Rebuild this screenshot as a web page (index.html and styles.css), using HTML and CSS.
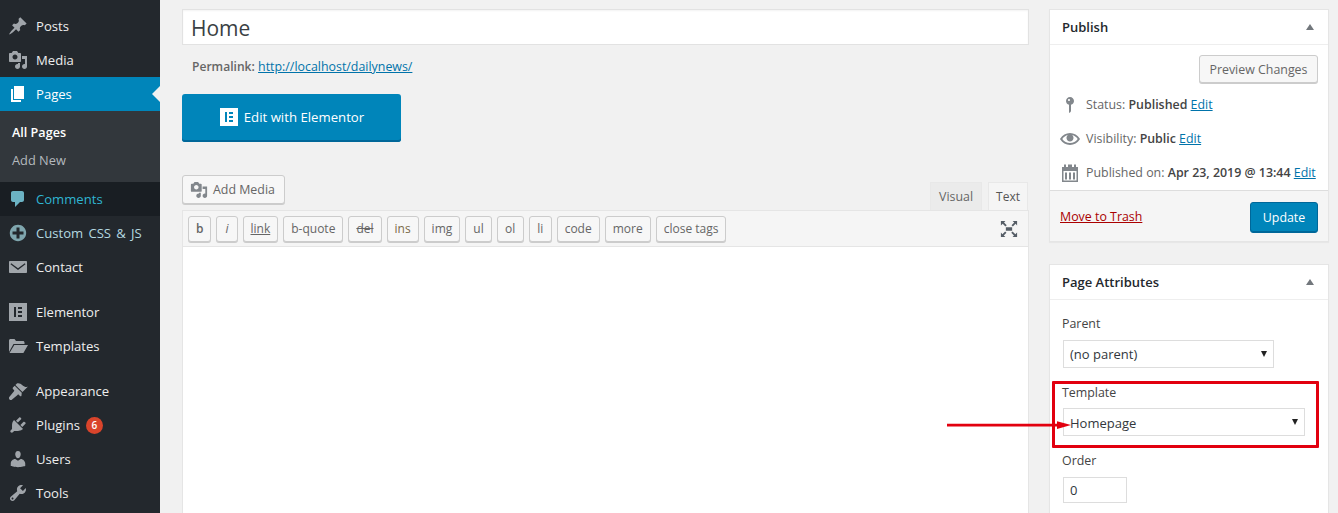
FILE: index.html
```html
<!DOCTYPE html>
<html lang="en">
<head>
<meta charset="utf-8">
<title>Edit Page</title>
<link rel="stylesheet" href="styles.css">
</head>
<body>
<svg class="sprite" aria-hidden="true">
  <symbol id="i-post" viewBox="0 0 20 20"><path d="M10.44 3.02l1.82-1.82 6.36 6.35-1.83 1.82c-1.05-.68-2.48-.57-3.41.36l-.75.75c-.92.93-1.04 2.35-.35 3.41l-1.83 1.82-2.41-2.41-2.8 2.79c-.42.42-3.38 2.71-3.8 2.29s1.86-3.39 2.28-3.81l2.79-2.79L4.1 9.36l1.83-1.82c1.05.69 2.48.57 3.4-.36l.75-.75c.93-.92 1.05-2.35.36-3.41z"/></symbol>
  <symbol id="i-media" viewBox="0 0 20 20"><path d="M13 11V4c0-.55-.45-1-1-1h-1.67L9 1H5L3.67 3H2c-.55 0-1 .45-1 1v7c0 .55.45 1 1 1h10c.55 0 1-.45 1-1zM7 4.5c1.38 0 2.5 1.12 2.5 2.5S8.38 9.5 7 9.5 4.5 8.38 4.5 7 5.62 4.5 7 4.5zM14 6h5v10.5c0 1.38-1.12 2.5-2.5 2.5S14 17.88 14 16.5s1.12-2.5 2.5-2.5c.17 0 .34.02.5.05V9h-3V6zm-4 8.05V13h2v3.5c0 1.38-1.12 2.5-2.5 2.5S7 17.88 7 16.5 8.12 14 9.5 14c.17 0 .34.02.5.05z"/></symbol>
  <symbol id="i-page" viewBox="0 0 20 20"><path d="M6 15V2h10v13H6zm-1 1h8v2H3V5h2v11z"/></symbol>
  <symbol id="i-comment" viewBox="0 0 20 20"><path d="M5 2h9c1.1 0 2 .9 2 2v7c0 1.1-.9 2-2 2h-2l-5 5v-5H5c-1.1 0-2-.9-2-2V4c0-1.1.9-2 2-2z"/></symbol>
  <symbol id="i-plus" viewBox="0 0 20 20"><path d="M15.8 4.2c3.2 3.21 3.2 8.39 0 11.6-3.21 3.2-8.39 3.2-11.6 0C1 12.59 1 7.41 4.2 4.2 7.41 1 12.59 1 15.8 4.2zm-4.3 11.3v-4h4v-3h-4v-4h-3v4h-4v3h4v4h3z"/></symbol>
  <symbol id="i-mail" viewBox="0 0 20 20"><path fill-rule="evenodd" d="M2 4h16c.55 0 1 .45 1 1v10c0 .55-.45 1-1 1H2c-.55 0-1-.45-1-1V5c0-.55.45-1 1-1zm1.2 2.2L10 11.2l6.8-5 .7 1L10 13 2.500 7.200z"/></symbol>
  <symbol id="i-elementor" viewBox="0 0 20 20"><path fill-rule="evenodd" d="M1 1h18v18H1V1zm5 4v10h2V5H6zm4 0v2h4V5h-4zm0 4v2h4V9h-4zm0 4v2h4v-2h-4z"/></symbol>
  <symbol id="i-folder" viewBox="0 0 20 20"><path d="M1 16V4.500C1 3.700 1.700 3 2.500 3h4L8 5h7c.8 0 1.500.7 1.500 1.500V8H5.500L1 16zM1.500 17l4.800-8H20l-4.600 8H1.500z"/></symbol>
  <symbol id="i-brush" viewBox="0 0 20 20"><path d="M14.48 11.06L7.41 3.990l1.500-1.500c.5-.56 2.300-.47 3.510.32 1.210.8 1.430 1.280 2.910 2.100 1.180.64 2.450 1.260 4.450.85zM13.770 11.770L6.700 4.700 4.930 6.470c-.39.39-.39 1.020 0 1.410l1.060 1.060c.39.39.39 1.030 0 1.420L1.500 15.800c-.7.7-.7 1.900 0 2.600s1.900.7 2.600 0l5.440-4.490c.39-.39 1.030-.39 1.420 0l1.060 1.060c.39.39 1.020.39 1.410 0z"/></symbol>
  <symbol id="i-plug" viewBox="0 0 20 20"><path d="M13.110 4.360L9.870 7.600 8 5.730l3.240-3.240c.35-.34 1.050-.2 1.560.32.52.51.66 1.210.31 1.550zm-8 1.770l.91-1.120 9.010 9.010-1.190.84c-.71.71-2.630 1.160-3.820 1.160H6.140L4.900 17.260c-.59.59-1.540.59-2.120 0-.59-.58-.59-1.530 0-2.120l1.240-1.240v-3.880c0-1.130.4-3.190 1.090-3.890zm7.260 3.970l3.240-3.240c.34-.35 1.040-.21 1.550.31.52.51.66 1.210.31 1.550l-3.240 3.250z"/></symbol>
  <symbol id="i-users" viewBox="0 0 20 20"><path d="M10 9.250c-2.270 0-2.730-3.440-2.730-3.440C7 4.020 7.820 2 9.970 2c2.160 0 2.980 2.020 2.710 3.810 0 0-.41 3.440-2.680 3.440zm0 2.570L12.720 10c2.390 0 4.520 2.330 4.520 4.530v2.490s-3.650 1.130-7.240 1.130c-3.650 0-7.240-1.130-7.240-1.130v-2.490c0-2.250 1.940-4.480 4.470-4.480z"/></symbol>
  <symbol id="i-tools" viewBox="0 0 20 20"><path d="M16.680 9.770c-1.340 1.340-3.300 1.670-4.950.99l-5.410 6.520c-.99.99-2.590.99-3.580 0s-.99-2.590 0-3.570l6.520-5.420c-.68-1.650-.35-3.610.99-4.950 1.280-1.280 3.120-1.620 4.720-1.060l-2.890 2.890 2.820 2.820 2.860-2.870c.53 1.580.18 3.390-1.080 4.650zM3.810 16.210c.4.39 1.040.39 1.430 0 .4-.4.4-1.040 0-1.430-.39-.4-1.030-.4-1.430 0-.39.39-.39 1.030 0 1.430z"/></symbol>
  <symbol id="i-pin" viewBox="0 0 20 20"><path fill-rule="evenodd" d="M14 6c0 1.860-1.280 3.410-3 3.860V16c0 1-2 2-2 2V9.860c-1.720-.45-3-2-3-3.860 0-2.210 1.790-4 4-4s4 1.790 4 4zM8 5c0 .55.45 1 1 1s1-.45 1-1-.45-1-1-1-1 .45-1 1z"/></symbol>
  <symbol id="i-eye" viewBox="0 0 20 20"><path d="M19.700 9.400C17.700 6 14 3.900 10 3.900S2.300 6 .3 9.400L0 10l.3.6c2 3.400 5.700 5.500 9.700 5.500s7.700-2.100 9.700-5.500l.3-.6-.3-.6zM10 14.100c-3.100 0-6-1.600-7.700-4.100C3.600 8 5.700 6.600 8 6.100c-.9.6-1.500 1.700-1.500 2.900 0 1.900 1.600 3.500 3.500 3.500s3.500-1.600 3.500-3.500c0-1.200-.6-2.300-1.500-2.900 2.300.5 4.400 1.900 5.700 3.900-1.700 2.500-4.600 4.100-7.700 4.100z"/></symbol>
  <symbol id="i-cal" viewBox="0 0 20 20"><path fill-rule="evenodd" d="M4 1.500h2V4h2V1.500h4V4h2V1.500h2V4h2v15H2V4h2V1.500zM3.500 8v9.500h13V8h-13zM5 9.500h2v7H5v-7zm4 0h2v7H9v-7zm4 0h2v7h-2v-7z"/></symbol>
  <symbol id="i-full" viewBox="0 0 20 20"><path d="M6.500 8h7v4h-7zM1 1h5L4.500 2.700 7.500 5.700 6 7.200 3 4.200 1 6zM19 1v5l-1.700-1.800-3 3-1.500-1.500 3-3L14 1zM1 19v-5l1.700 1.800 3-3 1.500 1.500-3 3L6 19zM19 19h-5l1.500-1.700-3-3 1.500-1.500 3 3L19 14z"/></symbol>
</svg>

<div class="app">
  <nav class="menu">
    <ul class="menu-list">
      <li class="menu-item"><svg class="menu-icon"><use href="#i-post"/></svg>Posts</li>
      <li class="menu-item"><svg class="menu-icon"><use href="#i-media"/></svg>Media</li>
      <li class="menu-item is-current"><svg class="menu-icon"><use href="#i-page"/></svg>Pages</li>
      <li class="submenu">
        <div class="submenu-item is-current">All Pages</div>
        <div class="submenu-item">Add New</div>
      </li>
      <li class="menu-item is-hover"><svg class="menu-icon"><use href="#i-comment"/></svg>Comments</li>
      <li class="menu-item is-fading"><svg class="menu-icon"><use href="#i-plus"/></svg>Custom CSS &amp; JS</li>
      <li class="menu-item"><svg class="menu-icon"><use href="#i-mail"/></svg>Contact</li>
      <li class="menu-sep"></li>
      <li class="menu-item"><svg class="menu-icon"><use href="#i-elementor"/></svg>Elementor</li>
      <li class="menu-item"><svg class="menu-icon"><use href="#i-folder"/></svg>Templates</li>
      <li class="menu-sep"></li>
      <li class="menu-item"><svg class="menu-icon"><use href="#i-brush"/></svg>Appearance</li>
      <li class="menu-item"><svg class="menu-icon"><use href="#i-plug"/></svg>Plugins<span class="count">6</span></li>
      <li class="menu-item"><svg class="menu-icon"><use href="#i-users"/></svg>Users</li>
      <li class="menu-item"><svg class="menu-icon"><use href="#i-tools"/></svg>Tools</li>
    </ul>
  </nav>

  <main class="content">
    <section class="editor-col">
      <input class="title-input" type="text" value="Home">
      <p class="permalink"><strong>Permalink:</strong> <a href="#">http://localhost/dailynews/</a></p>
      <a class="elementor-btn" href="#"><svg class="elementor-logo" viewBox="0 0 20 20"><use href="#i-elementor"/></svg>Edit with Elementor</a>

      <div class="editor-head">
        <button class="btn media-btn" type="button"><svg class="media-icon"><use href="#i-media"/></svg>Add Media</button>
        <div class="tabs">
          <span class="tab">Visual</span>
          <span class="tab is-active">Text</span>
        </div>
      </div>
      <div class="editor">
        <div class="toolbar">
          <button class="qt b" type="button">b</button>
          <button class="qt i" type="button">i</button>
          <button class="qt link" type="button">link</button>
          <button class="qt" type="button">b-quote</button>
          <button class="qt del" type="button">del</button>
          <button class="qt ins" type="button">ins</button>
          <button class="qt" type="button">img</button>
          <button class="qt" type="button">ul</button>
          <button class="qt ol" type="button">ol</button>
          <button class="qt li" type="button">li</button>
          <button class="qt" type="button">code</button>
          <button class="qt" type="button">more</button>
          <button class="qt" type="button">close tags</button>
          <svg class="full-icon"><use href="#i-full"/></svg>
        </div>
        <div class="editor-area"></div>
      </div>
    </section>

    <aside class="side-col">
      <section class="box publish">
        <header class="box-head"><h2>Publish</h2><span class="toggle"></span></header>
        <div class="publish-main">
          <div class="preview-row"><button class="btn" type="button">Preview Changes</button></div>
          <div class="misc"><svg class="misc-icon"><use href="#i-pin"/></svg><span>Status: <b>Published</b> <a href="#">Edit</a></span></div>
          <div class="misc"><svg class="misc-icon"><use href="#i-eye"/></svg><span>Visibility: <b>Public</b> <a href="#">Edit</a></span></div>
          <div class="misc"><svg class="misc-icon"><use href="#i-cal"/></svg><span>Published on: <b>Apr 23, 2019 @ 13:44</b> <a href="#">Edit</a></span></div>
        </div>
        <footer class="publish-foot">
          <a class="trash" href="#">Move to Trash</a>
          <button class="update-btn" type="button">Update</button>
        </footer>
      </section>

      <section class="box attrs">
        <header class="box-head"><h2>Page Attributes</h2><span class="toggle"></span></header>
        <div class="attrs-body">
          <p class="field-label">Parent</p>
          <div class="select parent"><span>(no parent)</span></div>
          <p class="field-label">Template</p>
          <div class="select template"><span>Homepage</span></div>
          <p class="field-label">Order</p>
          <input class="order" type="text" value="0">
          <p class="help">Need help? Use the Help tab above the screen title.</p>
        </div>
      </section>
    </aside>
  </main>

  <div class="mark-box"></div>
  <svg class="mark-arrow" viewBox="0 0 124 12"><path d="M0 4.800h112v2.600H0z" fill="#e2000f"/><path d="M110 2.300l14 3.800-14 3.800z" fill="#e2000f"/></svg>
</div>
</body>
</html>
```

FILE: styles.css
```css
* { box-sizing: border-box; }
html, body { margin: 0; height: 513px; overflow: hidden; }
body { background: #f1f1f1; color: #444; font: 12.400px/1.4 "Open Sans", "Liberation Sans", sans-serif; }
.sprite { display: none; }
a { color: #0073aa; }
svg { fill: currentColor; }

.app { position: relative; display: flex; width: 1338px; height: 513px; overflow: hidden; }

/* Admin menu */
.menu { flex: 0 0 160px; background: #23282d; padding-top: 9px; }
.menu-list { list-style: none; margin: 0; padding: 0; }
.menu-item { position: relative; display: flex; align-items: center; height: 34px; padding-left: 8px; color: #eee; font-size: 13.100px; }
.menu-icon { width: 20px; height: 20px; margin-right: 8px; color: #a0a5aa; flex: none; }
.menu-sep { height: 11px; }
.menu-item.is-current { background: #0085ba; color: #fff; }
.is-current .menu-icon { color: #fff; }
.menu-item.is-current::after { content: ""; position: absolute; right: 0; top: 9px; border: 8px solid transparent; border-right-color: #f1f1f1; border-left-width: 0; }
.menu-item.is-hover { background: #191e23; color: #2fb5d2; }
.is-hover .menu-icon { color: #6cb3c4; }
.menu-item.is-fading { color: #b4d8e0; word-spacing: 1.800px; }
.is-fading .menu-icon { color: #7fa6ae; }
.submenu { background: #32373c; height: 71px; padding: 7px 0 0 12px; }
.submenu-item { height: 28px; line-height: 28px; color: #b4b9be; font-size: 12.800px; }
.submenu-item.is-current { color: #fff; font-weight: 600; font-size: 12.600px; line-height: 30px; }
.count { display: inline-block; width: 17px; height: 17px; margin-left: 6px; border-radius: 50%; background: #d9442b; color: #fff; font-size: 10px; font-weight: 600; line-height: 17px; text-align: center; }

/* Layout */
.content { flex: 1; display: flex; gap: 20px; padding: 9px 9px 0 22px; min-width: 0; }
.editor-col { flex: 0 0 847px; min-width: 0; }
.side-col { flex: 0 0 280px; min-width: 0; }

/* Title */
.title-input { display: block; width: 100%; height: 36px; padding: 5px 8px 3px; border: 1px solid #e2e2e2; background: #fff; box-shadow: inset 0 1px 2px rgba(0,0,0,.05); color: #3a3f44; font: 21px "Open Sans", sans-serif; outline: 0; }
.permalink { margin: 12px 0 0; padding-left: 10px; height: 19px; line-height: 19px; color: #666; }
.permalink strong { font-weight: 600; font-size: 12.100px; }
.elementor-btn { display: flex; align-items: center; justify-content: center; width: 219px; height: 48px; margin-top: 18px; padding-bottom: 2px; border-radius: 3px; background: #0085ba; box-shadow: inset 0 -2px 0 #006799; color: #fff; font-size: 13.200px; text-decoration: none; }
.elementor-logo { width: 20px; height: 20px; margin-right: 5px; color: #fff; }

/* Editor */
.editor-head { display: flex; justify-content: space-between; align-items: flex-end; height: 35px; margin-top: 33px; }
.btn { display: inline-flex; align-items: center; height: 28px; padding: 0 9.500px; border: 1px solid #ccc; border-radius: 3px; background: #f7f7f7; box-shadow: 0 1px 0 #ccc; color: #666; font: 12.400px "Open Sans", sans-serif; }
.media-btn { align-self: flex-start; height: 29px; padding: 0 9px 0 7px; }
.media-icon { width: 18px; height: 18px; margin-right: 5px; color: #82878c; }
.tabs { display: flex; gap: 6px; }
.tab { height: 28px; padding: 0 8px; line-height: 27px; border: 1px solid #e8e8e8; border-bottom: 0; background: #ebebeb; color: #666; }
.tab.is-active { background: #f5f5f5; padding: 0 7px; color: #555; margin-right: 1px; font-size: 12px; }
.editor { border: 1px solid #e5e5e5; border-top: 0; height: 304px; background: #fff; }
.toolbar { display: flex; align-items: center; gap: 5px; height: 37px; padding: 0 5px; background: #f5f5f5; border-top: 1px solid #e5e5e5; border-bottom: 1px solid #e5e5e5; }
.qt { height: 26px; padding: 0 7px; border: 1px solid #ccc; border-radius: 3px; background: #f7f7f7; box-shadow: 0 1px 0 #ccc; color: #666; font: 12px "Open Sans", sans-serif; }
.qt.b { font-weight: 600; }
.qt.i { font-style: italic; padding: 0 8px; }
.qt.link { text-decoration: underline; }
.qt.del { text-decoration: line-through; }
.qt.ins { color: #7a6a48; }
.qt.ol { width: 27px; }
.qt.li { width: 23px; }
.full-icon { width: 18px; height: 18px; margin-left: auto; margin-right: 5px; color: #555d66; }

/* Side boxes */
.box { border: 1px solid #e5e5e5; background: #fff; box-shadow: 0 1px 1px rgba(0,0,0,.04); }
.publish { height: 233px; display: flex; flex-direction: column; }
.attrs { margin-top: 22px; }
.box-head { display: flex; justify-content: space-between; align-items: center; height: 35px; padding: 0 14px 0 12px; border-bottom: 1px solid #eee; }
.box-head h2 { margin: 0; color: #23282d; font-size: 13px; font-weight: 600; }
.toggle { width: 0; height: 0; border: 4.500px solid transparent; border-top-width: 0; border-bottom: 6px solid #72777c; }
.publish-main { flex: 1; padding: 10px 10px 0 12px; }
.preview-row { display: flex; justify-content: flex-end; margin-bottom: 5px; }
.misc { display: flex; align-items: center; height: 34px; color: #666; white-space: nowrap; }
.misc b { color: #444; font-weight: 600; }
.misc-icon { flex: none; width: 20px; height: 20px; margin-right: 6px; margin-left: -2px; color: #82878c; }
.publish-foot { display: flex; justify-content: space-between; align-items: center; height: 51px; padding: 2px 10px 0; background: #f5f5f5; border-top: 1px solid #ddd; }
.trash { color: #a00; }
.update-btn { width: 68px; height: 31px; border: 1px solid #006799; border-radius: 3px; background: #0085ba; box-shadow: inset 0 -1px 0 #006799; color: #fff; font: 12.400px "Open Sans", sans-serif; }
.attrs-body { padding: 0 12px; }
.field-label { margin: 0; height: 19px; line-height: 19px; color: #444; }
.attrs-body .field-label:first-child { margin-top: 14px; }
.select { position: relative; height: 28px; margin: 7px 0 15px 1px; padding-left: 6px; line-height: 26px; border: 1px solid #ddd; background: #fff; color: #32373c; font-size: 13px; }
.select::after { content: ""; position: absolute; right: 6px; top: 10px; border: 3.500px solid transparent; border-bottom-width: 0; border-top: 6px solid #222; }
.select.parent { width: 211px; }
.select.template { width: 242px; margin-top: 6px; line-height: 28px; }
.order { display: block; width: 64px; height: 26px; margin: 7px 0 0 1px; padding: 0 6px; border: 1px solid #ddd; background: #fff; color: #32373c; font: 13px "Open Sans", sans-serif; outline: 0; }
.help { margin: 8px 0 0; padding-left: 11px; color: #666; font-size: 12px; }

/* Annotation drawn over the screenshot */
.mark-box { position: absolute; left: 1052px; top: 381px; width: 267px; height: 67px; border: 3px solid #e2000f; border-radius: 1px; }
.mark-arrow { position: absolute; left: 947px; top: 419px; width: 124px; height: 12px; }
```
